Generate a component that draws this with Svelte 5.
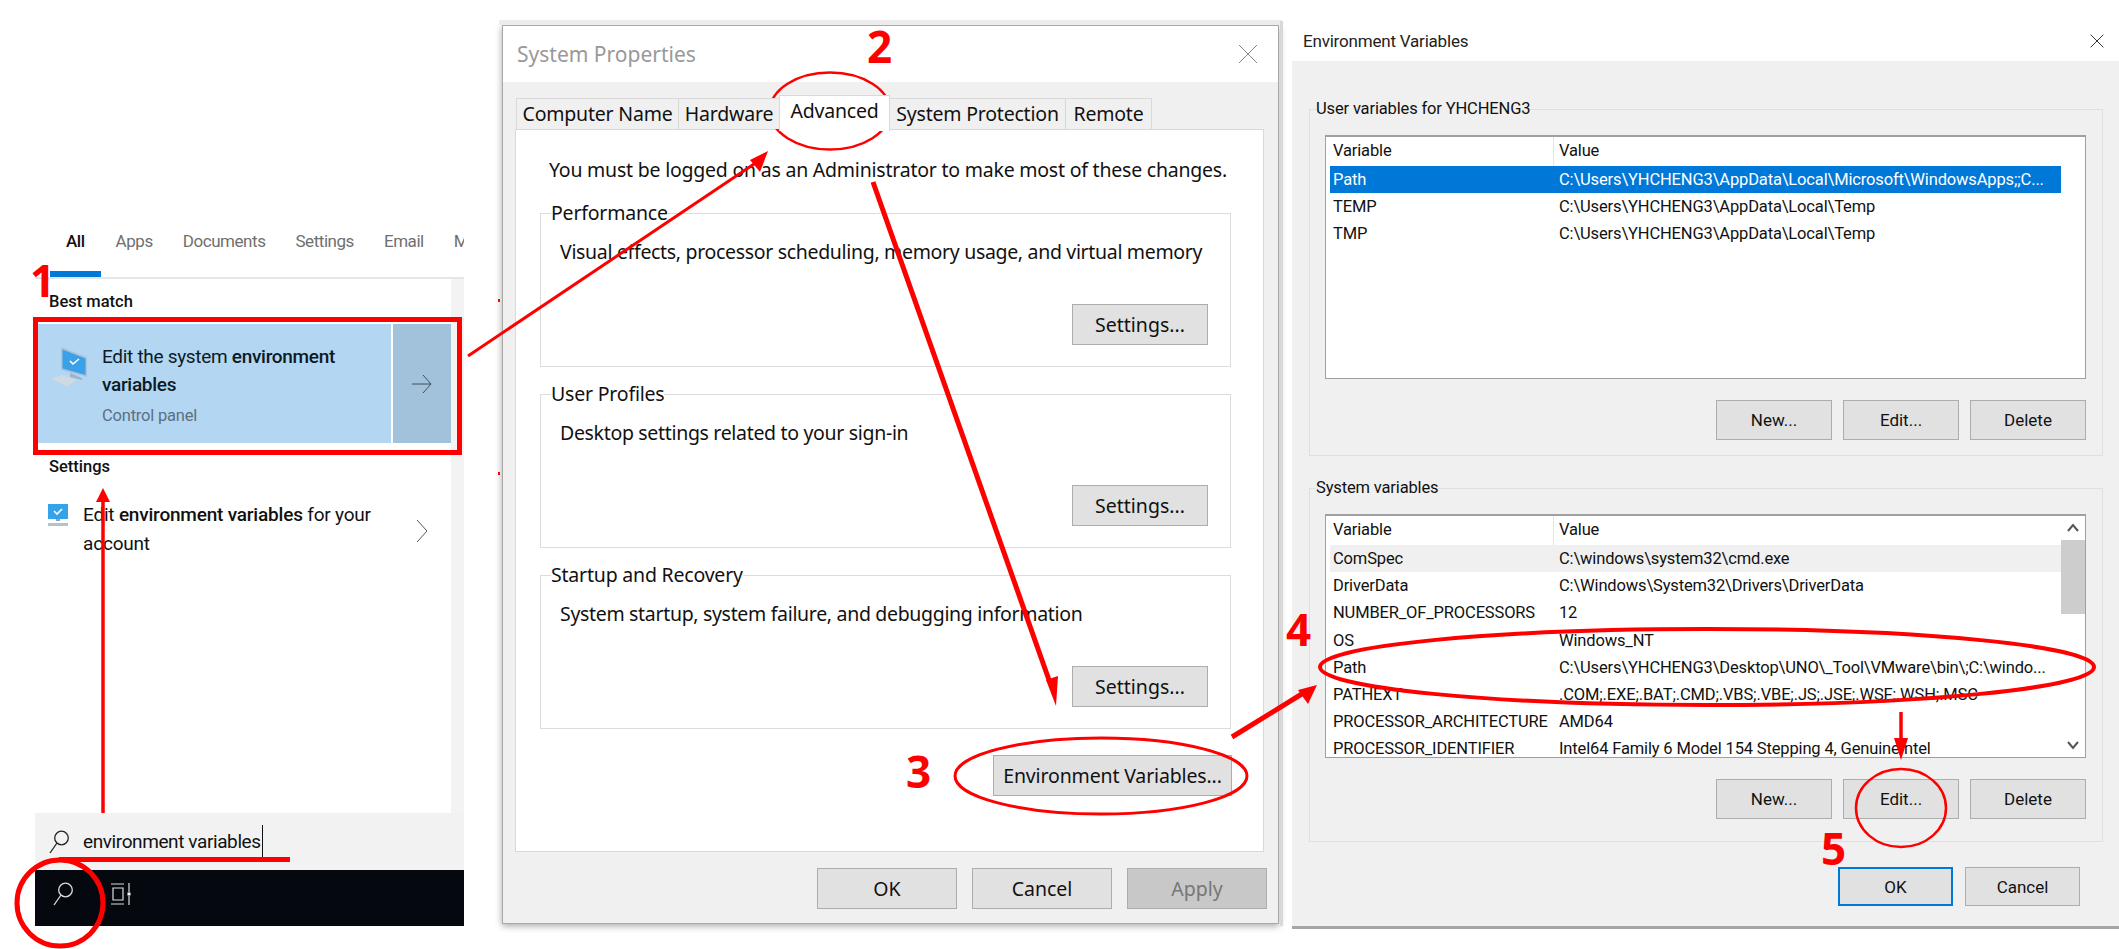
<script>
  const tabs = ["All", "Apps", "Documents", "Settings", "Email", "M"];
  const sysTabs = ["Computer Name", "Hardware", "Advanced", "System Protection", "Remote"];

  const groups = [
    { title: "Performance", text: "Visual effects, processor scheduling, memory usage, and virtual memory" },
    { title: "User Profiles", text: "Desktop settings related to your sign-in" },
    { title: "Startup and Recovery", text: "System startup, system failure, and debugging information" },
  ];

  const userVars = [
    ["Path", "C:\\Users\\YHCHENG3\\AppData\\Local\\Microsoft\\WindowsApps;;C..."],
    ["TEMP", "C:\\Users\\YHCHENG3\\AppData\\Local\\Temp"],
    ["TMP", "C:\\Users\\YHCHENG3\\AppData\\Local\\Temp"],
  ];

  const systemVars = [
    ["ComSpec", "C:\\windows\\system32\\cmd.exe"],
    ["DriverData", "C:\\Windows\\System32\\Drivers\\DriverData"],
    ["NUMBER_OF_PROCESSORS", "12"],
    ["OS", "Windows_NT"],
    ["Path", "C:\\Users\\YHCHENG3\\Desktop\\UNO\\_Tool\\VMware\\bin\\;C:\\windo..."],
    ["PATHEXT", ".COM;.EXE;.BAT;.CMD;.VBS;.VBE;.JS;.JSE;.WSF;.WSH;.MSC"],
    ["PROCESSOR_ARCHITECTURE", "AMD64"],
    ["PROCESSOR_IDENTIFIER", "Intel64 Family 6 Model 154 Stepping 4, GenuineIntel"],
  ];

  const steps = [
    { n: 1, x: 30, y: 250 },
    { n: 2, x: 867, y: 16 },
    { n: 3, x: 906, y: 741 },
    { n: 4, x: 1286, y: 599 },
    { n: 5, x: 1821, y: 818 },
  ];
</script>

{#snippet varList(rows, rowClass, scroll)}
  <div class="list" class:sys={scroll}>
    <div class="rows">
      <div class="row head"><span>Variable</span><span class="val">Value</span></div>
      {#each rows as r, i}
        <div class="row {i === 0 ? rowClass : ''}"><span>{r[0]}</span><span>{r[1]}</span></div>
      {/each}
    </div>
    {#if scroll}
      <div class="scrollbar">
        <svg class="sb-btn" viewBox="0 0 24 24"><path d="M7 15l5-6 5 6" /></svg>
        <div class="thumb"></div>
        <div class="track"></div>
        <svg class="sb-btn" viewBox="0 0 24 24"><path d="M7 9l5 6 5-6" /></svg>
      </div>
    {/if}
  </div>
{/snippet}

{#snippet close()}
  <svg class="close" viewBox="0 0 20 20"><path d="M1 1l18 18M19 1L1 19" /></svg>
{/snippet}

<div class="canvas">
  <!-- start menu search -->
  <section class="search">
    <nav class="s-tabs">
      {#each tabs as t, i}
        <span class="s-tab" class:on={i === 0}>{t}</span>
      {/each}
    </nav>
    <div class="s-main">
      <div class="s-content">
        <h4 class="s-head">Best match</h4>
        <div class="tile">
          <div class="tile-main">
            <svg class="pc" viewBox="0 0 38 42">
              <path d="M11 1l26 10v20L11 24z" fill="#a9c3d8" />
              <path d="M12.500 3.500l23 9v16.500l-23-6.500z" fill="#3aa0e8" />
              <path d="M20 15l3 3 6-5" fill="none" stroke="#fff" stroke-width="1.6" />
              <path d="M20 27l12 5v2l-12-3z" fill="#9eb4c6" />
              <path d="M1 33l11-4 15 5-10 6z" fill="#cfdae3" />
            </svg>
            <div class="tile-text">
              <div class="tile-title">Edit the system <b>environment variables</b></div>
              <div class="tile-sub">Control panel</div>
            </div>
          </div>
          <div class="tile-go">
            <svg viewBox="0 0 20 20" width="20" height="20"><path d="M0 10h19M11 1l8 9-8 9" fill="none" stroke="#3c4f5e" stroke-width="1" /></svg>
          </div>
        </div>
        <h4 class="s-head second">Settings</h4>
        <div class="s-row">
          <svg class="mon" viewBox="0 0 20 22">
            <rect x="0" y="0" width="20" height="15" fill="#35a3ea" />
            <path d="M6 7l3 3 5-5" fill="none" stroke="#fff" stroke-width="1.6" />
            <rect x="8" y="15" width="4" height="2" fill="#8aa4b8" />
            <rect x="0" y="19" width="20" height="3" fill="#b4c2cc" />
          </svg>
          <div class="s-row-text">Edit <b>environment variables</b> for your account</div>
          <svg class="chev" viewBox="0 0 10 22"><path d="M0 0l10 11L0 22" /></svg>
        </div>
      </div>
      <div class="s-strip"></div>
    </div>
    <div class="s-box">
      <svg class="glass" viewBox="0 0 20 24"><circle cx="12.5" cy="8" r="6.8" /><path d="M8 13L1 23" /></svg>
      <span class="s-query">environment variables</span><i class="caret"></i>
    </div>
    <div class="taskbar">
      <svg class="glass light" viewBox="0 0 20 24"><circle cx="12.5" cy="8" r="6.8" /><path d="M8 13L1 23" /></svg>
      <svg class="taskview" viewBox="0 0 20 22">
        <path d="M0 1h13M0 21h13M2 5h10v12H2zM18 0v9M18 13v9" />
        <rect x="16.5" y="9.5" width="3" height="3" fill="#fff" stroke="none" />
      </svg>
    </div>
  </section>

  <!-- System Properties -->
  <section class="win props">
    <header class="titlebar">
      <span class="title dim">System Properties</span>
      {@render close()}
    </header>
    <div class="p-body">
      <div class="p-tabs">
        {#each sysTabs as t}
          <span class="p-tab" class:on={t === "Advanced"}>{t}</span>
        {/each}
      </div>
      <div class="p-panel">
        <p class="p-note">You must be logged on as an Administrator to make most of these changes.</p>
        {#each groups as g}
          <fieldset class="p-group">
            <legend>{g.title}</legend>
            <p>{g.text}</p>
            <button class="btn settings">Settings...</button>
          </fieldset>
        {/each}
        <button class="btn envbtn">Environment Variables...</button>
      </div>
      <div class="p-foot">
        <button class="btn">OK</button>
        <button class="btn">Cancel</button>
        <button class="btn off">Apply</button>
      </div>
    </div>
  </section>
  <div class="edge top"></div>
  <div class="edge bottom"></div>

  <!-- Environment Variables -->
  <section class="win env">
    <header class="titlebar">
      <span class="title">Environment Variables</span>
      {@render close()}
    </header>
    <div class="e-body">
      <fieldset class="e-group">
        <legend>User variables for YHCHENG3</legend>
        {@render varList(userVars, "selected", false)}
        <div class="e-btns">
          <button class="btn">New...</button><button class="btn">Edit...</button><button class="btn">Delete</button>
        </div>
      </fieldset>
      <fieldset class="e-group second">
        <legend>System variables</legend>
        {@render varList(systemVars, "soft", true)}
        <div class="e-btns">
          <button class="btn">New...</button><button class="btn">Edit...</button><button class="btn">Delete</button>
        </div>
      </fieldset>
      <div class="e-foot">
        <button class="btn primary">OK</button>
        <button class="btn">Cancel</button>
      </div>
    </div>
  </section>

  <!-- red annotations drawn over the windows -->
  <svg class="marks" viewBox="0 0 2119 949">
    <g fill="none" stroke="#f00">
      <rect x="35.5" y="319.5" width="424" height="133" stroke-width="5" />
      <path d="M59 859.5h231" stroke-width="5" />
      <circle cx="60" cy="903" r="43" stroke-width="5" />
      <ellipse cx="830" cy="111" rx="60" ry="38.500" stroke-width="2.500" />
      <ellipse cx="1101" cy="776" rx="146" ry="38" stroke-width="3" />
      <ellipse cx="1707" cy="667" rx="387" ry="38" stroke-width="4" />
      <ellipse cx="1901" cy="808" rx="45" ry="39" stroke-width="2.500" />
      <path d="M468 356L760 160" stroke-width="3" />
      <path d="M103 813V500" stroke-width="3.500" />
      <path d="M873 182L1049 680" stroke-width="5" />
      <path d="M1232 737L1305 692" stroke-width="5" />
      <path d="M1901 712V740" stroke-width="3.500" />
    </g>
    <g fill="#f00">
      <path d="M768 151L750 160L760 172z" />
      <path d="M103 488L96 502H110z" />
      <path d="M1056 706L1046 680L1058 676z" />
      <path d="M1317 685L1298 690L1308 704z" />
      <path d="M1901 760L1894 738H1908z" />
      <rect x="498" y="299" width="2" height="3" />
      <rect x="498" y="472" width="2" height="3" />
    </g>
  </svg>
  {#each steps as s}
    <span class="step" style="left: {s.x}px; top: {s.y}px">{s.n}</span>
  {/each}
</div>

<style>
  :global(body) {
    background: #fff;
  }

  .canvas {
    position: relative;
    width: 2119px;
    height: 949px;
    overflow: hidden;
    background: #fff;
    font-family: "Noto Sans", "Open Sans", sans-serif;
    color: #111;
  }

  button {
    font-family: inherit;
    color: inherit;
  }

  p,
  h4 {
    margin: 0;
  }

  /* search flyout */
  .search {
    position: absolute;
    left: 35px;
    top: 221px;
    width: 429px;
    font-family: Roboto, sans-serif;
  }

  .s-tabs {
    display: flex;
    height: 56px;
    padding-left: 15px;
    overflow: hidden;
    border-bottom: 2px solid #e6e6e6;
    box-sizing: content-box;
    font-size: 17px;
    letter-spacing: -0.45px;
    color: #6f6f6f;
  }

  .s-tab {
    flex: none;
    padding: 7px 15px 0;
    line-height: 26px;
    white-space: nowrap;
    border-bottom: 6px solid transparent;
    box-sizing: content-box;
    height: 43px;
  }

  .s-tab.on {
    padding: 7px 16px 0;
    color: #111;
    font-weight: 500;
    border-bottom-color: #0078d7;
  }

  .s-main {
    display: flex;
    height: 534px;
  }

  .s-content {
    flex: 1;
    background: #fff;
    padding-top: 11px;
    min-width: 0;
  }

  .s-strip {
    width: 13px;
    background: #f3f3f3;
  }

  .s-head {
    font-size: 16.500px;
    font-weight: 500;
    line-height: 24px;
    padding-left: 14px;
    margin-bottom: 10px;
  }

  .s-head.second {
    margin: 12px 0 0;
  }

  .tile {
    display: flex;
    margin-left: 3px;
    height: 119px;
    gap: 2px;
  }

  .tile-main {
    flex: 1;
    display: flex;
    background: #b3d6f2;
    padding: 22px 12px 0 12px;
    gap: 14px;
  }

  .pc {
    width: 38px;
    height: 42px;
  }

  .tile-text {
    width: 250px;
    margin-top: -3px;
  }

  .tile-title {
    font-size: 19px;
    line-height: 28px;
    letter-spacing: -0.3px;
    color: #0d1a24;
  }

  .tile-title b,
  .s-row-text b {
    font-weight: 500;
  }

  .tile-sub {
    font-size: 16.500px;
    line-height: 30px;
    margin-top: 2px;
    letter-spacing: -0.2px;
    color: #5a7083;
  }

  .tile-go {
    width: 58px;
    background: #a2c1da;
    display: flex;
    align-items: center;
    justify-content: center;
  }

  .s-row {
    display: flex;
    padding: 25px 24px 0 13px;
    align-items: flex-start;
  }

  .mon {
    width: 20px;
    height: 22px;
    flex: none;
    margin-right: 15px;
  }

  .s-row-text {
    flex: 1;
    font-size: 19px;
    line-height: 29px;
    letter-spacing: -0.2px;
    margin-top: -4px;
    width: 290px;
  }

  .chev {
    width: 10px;
    height: 22px;
    margin-top: 16px;
    fill: none;
    stroke: #555;
  }

  .s-box {
    display: flex;
    align-items: center;
    height: 57px;
    background: #f2f2f2;
    padding-left: 14px;
    font-size: 19px;
    letter-spacing: -0.4px;
  }

  .glass {
    width: 20px;
    height: 24px;
    fill: none;
    stroke: #222;
    stroke-width: 1.3;
    flex: none;
  }

  .glass.light {
    stroke: #ddd;
  }

  .s-query {
    margin-left: 14px;
  }

  .caret {
    width: 1px;
    height: 33px;
    margin-left: 1px;
    background: #111;
  }

  .taskbar {
    display: flex;
    align-items: center;
    height: 56px;
    background: #05090f;
    padding-left: 18px;
    padding-bottom: 8px;
    box-sizing: border-box;
    gap: 38px;
  }

  .taskview {
    width: 20px;
    height: 22px;
    fill: none;
    stroke: #ddd;
    stroke-width: 1.2;
  }

  /* dialogs */
  .win {
    position: absolute;
    display: flex;
    flex-direction: column;
    box-sizing: border-box;
    background: #f0f0f0;
  }

  .titlebar {
    display: flex;
    align-items: center;
    justify-content: space-between;
    background: #fff;
    flex: none;
  }

  .close {
    fill: none;
    stroke: #333;
    stroke-width: 1.4;
  }

  .btn {
    background: #e1e1e1;
    border: 1.5px solid #adadad;
    padding: 0;
    width: 116px;
    height: 40px;
    font-size: 17px;
  }

  /* System Properties */
  .props {
    left: 502px;
    top: 25px;
    width: 777px;
    height: 899px;
    border: 1px solid #a8a8a8;
    box-shadow: 0 2px 7px rgba(0, 0, 0, 0.35);
  }

  .edge {
    position: absolute;
    left: 499px;
    width: 783px;
    background: #ececec;
  }

  .edge.top {
    top: 20px;
    height: 5px;
  }

  .edge.bottom {
    top: 924px;
    height: 8px;
    z-index: -1;
  }

  .props .titlebar {
    height: 56px;
    padding: 0 20px 0 14px;
  }

  .title {
    font-size: 21px;
  }

  .title.dim {
    color: #999;
  }

  .props .close {
    width: 20px;
    height: 20px;
    stroke: #888;
    stroke-width: 1;
  }

  .p-body {
    flex: 1;
    padding: 16px 13px 0 12px;
    display: flex;
    flex-direction: column;
    font-size: 19.500px;
  }

  .p-tabs {
    display: flex;
    height: 31px;
    padding-left: 2px;
    position: relative;
    z-index: 1;
  }

  .p-tab {
    display: flex;
    align-items: center;
    justify-content: center;
    box-sizing: border-box;
    background: #f0f0f0;
    border: 1px solid #d9d9d9;
    border-bottom: none;
    margin-left: -1px;
    padding-bottom: 2px;
    letter-spacing: -0.2px;
  }

  .p-tab:nth-child(1) {
    width: 163px;
  }

  .p-tab:nth-child(2) {
    width: 102px;
  }

  .p-tab:nth-child(3) {
    width: 111px;
    height: 36px;
    margin-top: -3px;
    padding-bottom: 6px;
    background: #fff;
  }

  .p-tab:nth-child(4) {
    width: 177px;
  }

  .p-tab:nth-child(5) {
    width: 87px;
  }

  .p-panel {
    box-sizing: border-box;
    width: 749px;
    height: 723px;
    background: #fff;
    border: 1px solid #d9d9d9;
    padding: 27px 32px 0 24px;
    display: flex;
    flex-direction: column;
  }

  .p-note {
    line-height: 26px;
    padding-left: 9px;
    white-space: nowrap;
    margin-bottom: 17px;
    letter-spacing: -0.22px;
  }

  .p-group {
    box-sizing: border-box;
    margin: 0 0 14px;
    padding: 0 22px 0 19px;
    height: 167px;
    border: 1px solid #dcdcdc;
    min-width: 0;
  }

  .p-group legend {
    margin-left: -9px;
    padding: 0;
    line-height: 26px;
    letter-spacing: -0.2px;
  }

  .p-group p {
    line-height: 26px;
    margin-top: 13px;
    white-space: nowrap;
    letter-spacing: -0.32px;
  }

  .settings {
    display: block;
    width: 136px;
    height: 41px;
    margin: 39px 0 0 auto;
    font-size: 19.500px;
  }

  .envbtn {
    width: 239px;
    height: 41px;
    font-size: 19.500px;
    letter-spacing: -0.15px;
    align-self: flex-end;
    margin-top: 12px;
    margin-right: -1px;
  }

  .p-foot {
    display: flex;
    gap: 15px;
    justify-content: flex-end;
    padding-top: 16px;
    margin-right: -2px;
  }

  .p-foot .btn {
    width: 140px;
    height: 41px;
    font-size: 19.500px;
  }

  .btn.off {
    background: #c8c8c8;
    color: #777;
  }

  /* Environment Variables */
  .env {
    left: 1292px;
    top: 21px;
    width: 827px;
    height: 908px;
    border-bottom: 3px solid #a6a6a6;
    font-family: Roboto, sans-serif;
  }

  .env::before {
    content: "";
    position: absolute;
    left: -12px;
    top: 0;
    bottom: 0;
    width: 3px;
    background: #d8d8d8;
  }

  .env .titlebar {
    height: 40px;
    padding: 0 15px 0 11px;
  }

  .env .title {
    font-size: 17px;
    letter-spacing: -0.2px;
    color: #222;
  }

  .env .close {
    width: 14px;
    height: 14px;
  }

  .e-body {
    padding: 36px 16px 0 17px;
    flex: 1;
    display: flex;
    flex-direction: column;
    font-size: 16.500px;
    letter-spacing: -0.15px;
  }

  .e-group {
    box-sizing: border-box;
    margin: 0;
    padding: 0 16px 0 15px;
    height: 359px;
    border: 1px solid #dfdfdf;
    min-width: 0;
  }

  .e-group.second {
    margin-top: 20px;
    height: 366px;
  }

  .e-group legend {
    margin-left: -9px;
    padding: 0;
    line-height: 24px;
  }

  .list {
    display: flex;
    box-sizing: border-box;
    height: 244px;
    margin-top: 14px;
    background: #fff;
    border: 1px solid #a0a0a0;
    border-top-width: 2px;
    padding-left: 4px;
    overflow: hidden;
  }

  .rows {
    width: 731px;
    flex: none;
  }

  .row {
    display: grid;
    grid-template-columns: 226px 1fr;
    height: 27.200px;
    line-height: 27px;
    padding-left: 3px;
    white-space: nowrap;
  }

  .row.head {
    height: 29px;
    position: relative;
  }

  .row.head .val {
    border-left: 1px solid #e5e5e5;
    padding-left: 5px;
    margin-left: -6px;
  }

  .row.selected {
    background: #0078d7;
    color: #fff;
  }

  .row.soft {
    background: #f0f0f0;
  }

  .scrollbar {
    flex: 1;
    display: flex;
    flex-direction: column;
  }

  .sb-btn {
    width: 24px;
    height: 24px;
    flex: none;
    fill: none;
    stroke: #555;
    stroke-width: 2;
  }

  .thumb {
    height: 74px;
    background: #cdcdcd;
  }

  .track {
    flex: 1;
  }

  .e-btns {
    display: flex;
    justify-content: flex-end;
    gap: 11px;
    margin-top: 21px;
  }

  .e-foot {
    display: flex;
    gap: 12px;
    justify-content: flex-end;
    margin-top: 25px;
    padding-right: 23px;
  }

  .e-foot .btn {
    width: 115px;
    height: 39px;
  }

  .btn.primary {
    border: 2px solid #0078d7;
  }

  /* annotation layer */
  .marks {
    position: absolute;
    left: 0;
    top: 0;
    width: 2119px;
    height: 949px;
    pointer-events: none;
  }

  .step {
    position: absolute;
    font-family: "Noto Sans", sans-serif;
    font-weight: 700;
    font-size: 44px;
    line-height: 60px;
    color: #f00;
  }
</style>
